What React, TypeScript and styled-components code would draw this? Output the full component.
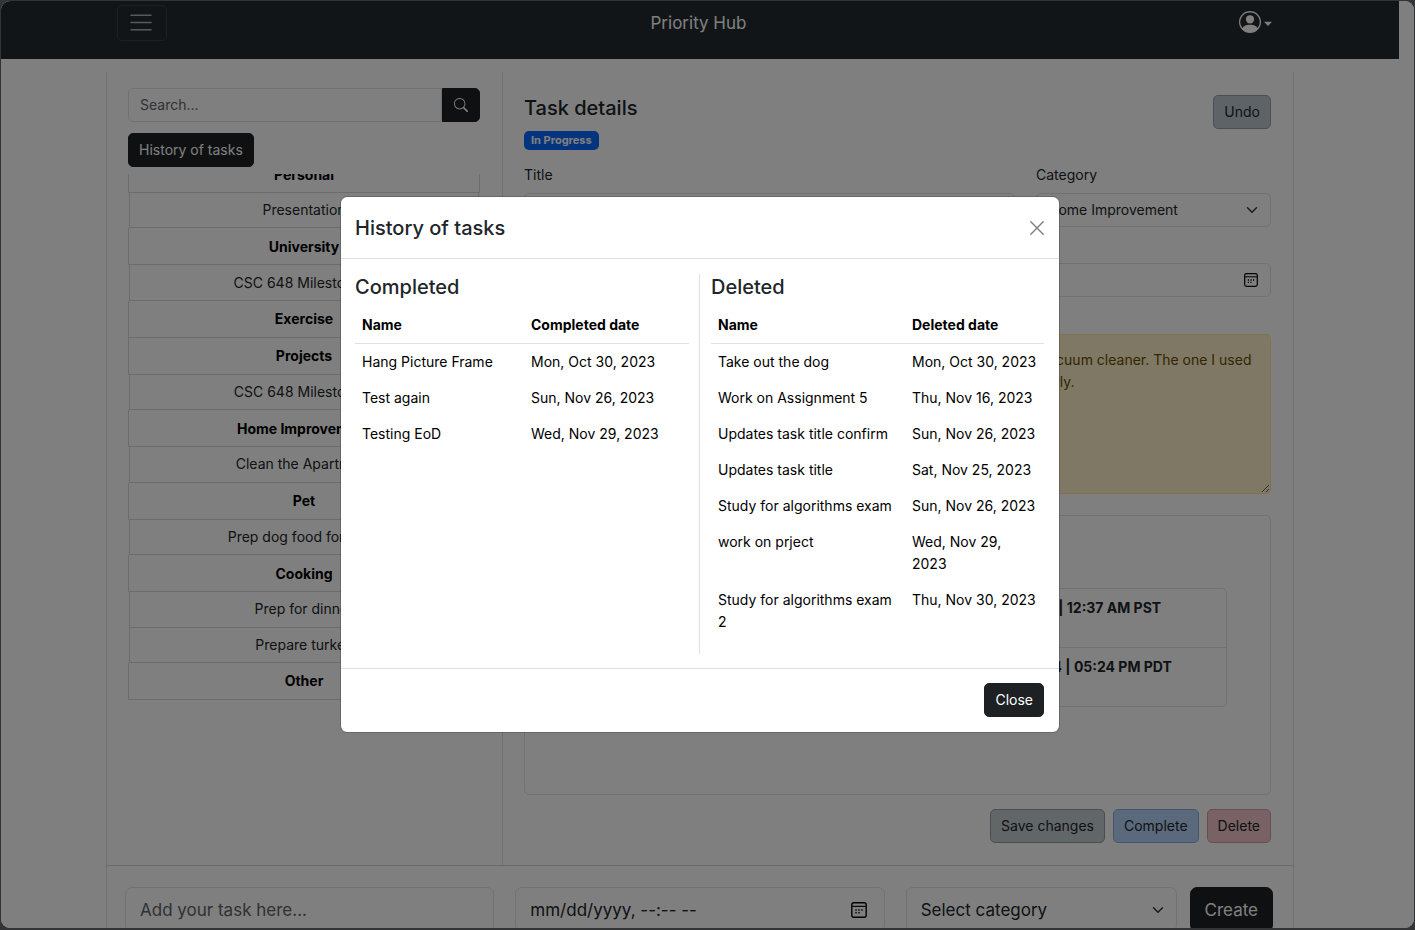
import React, { useLayoutEffect, useRef } from "react";
import styled, { createGlobalStyle, css } from "styled-components";
import { BsPersonCircle, BsSearch } from "react-icons/bs";

const GlobalStyle = createGlobalStyle`
  *, *::before, *::after { box-sizing: border-box; }
  body { margin: 0; background: #323436; }
  body, button, input, select, textarea {
    font-family: Inter, "Liberation Sans", sans-serif;
    font-size: 14px;
    line-height: 22px;
    color: #212529;
  }
  h1, h2, h3, p, ul { margin: 0; padding: 0; }
`;

const Frame = styled.div`
  height: 100vh;
  padding: 1px 1px 2px;
  background: #323436;
`;

const Window = styled.div`
  position: relative;
  height: 100%;
  overflow: hidden;
  border-radius: 9px;
  background: #fff;
`;

const Page = styled.div`
  margin-right: 15px;
`;

const Navbar = styled.header`
  height: 58px;
  padding: 4px 0;
  background: #222a2e;
`;

const NavInner = styled.div`
  display: grid;
  grid-template-columns: 1fr auto 1fr;
  align-items: center;
  max-width: 1188px;
  height: 36px;
  margin: 0 auto;
  padding: 0 22px 0 11px;
`;

const MenuButton = styled.button`
  display: flex;
  align-items: center;
  justify-content: center;
  width: 50px;
  height: 36px;
  padding: 0 2px 0 0;
  border: 1px solid #394044;
  border-radius: 5px;
  background: none;
  color: #b0b2b3;
`;

const Brand = styled.h1`
  padding-left: 8px;
  font-size: 17px;
  line-height: 28px;
  font-weight: 400;
  color: #fff;
`;

const UserButton = styled.button`
  display: flex;
  align-items: center;
  gap: 3px;
  justify-self: end;
  padding: 0 0 2px;
  border: 0;
  background: none;
  color: #fff;
`;

const Board = styled.main`
  max-width: 1188px;
  margin: 13px auto 0;
  border: solid #dee2e6;
  border-width: 0 1px;
`;

const Columns = styled.div`
  display: grid;
  grid-template-columns: 396fr 790fr;
  height: 794px;
  border-bottom: 1px solid #d4d7da;
`;

const Sidebar = styled.aside`
  padding: 16px 22px 0 21px;
  border-right: 1px solid #dee2e6;
`;

const fieldStyle = css`
  width: 100%;
  padding: 0 11px;
  border: 1px solid #dee2e6;
  background: #fff;
  border-radius: 5px;
`;

const SearchForm = styled.form`
  display: flex;
  height: 34px;
  margin-bottom: 11px;
`;

const SearchInput = styled.input`
  ${fieldStyle}
  flex: 1;
  min-width: 0;
  border-radius: 5px 0 0 5px;
  &::placeholder { color: #5f6367; opacity: 1; }
`;

const tones = {
  dark: { bg: "#1d2124", border: "#1d2124", text: "#fff" },
  slate: { bg: "#bcc7d0", border: "#98a0a8", text: "#212529" },
  grey: { bg: "#c3ccd3", border: "#979da3", text: "#212529" },
  blue: { bg: "#b5d2f6", border: "#83aee0", text: "#212529" },
  red: { bg: "#f2c4c8", border: "#d999a0", text: "#212529" },
};

const Button = styled.button<{ $tone: keyof typeof tones }>`
  height: 34px;
  padding: 0 10px;
  border: 1px solid ${(p) => tones[p.$tone].border};
  border-radius: 5px;
  background: ${(p) => tones[p.$tone].bg};
  color: ${(p) => tones[p.$tone].text};
  white-space: nowrap;
`;

const SearchButton = styled(Button)`
  display: flex;
  align-items: center;
  justify-content: center;
  width: 38px;
  border-radius: 0 5px 5px 0;
`;

const TaskScroller = styled.div`
  height: 526px;
  margin-top: 7px;
  overflow-y: auto;
  scrollbar-width: none;
`;

const TaskList = styled.ul`
  display: flex;
  flex-direction: column;
  height: 544px;
  list-style: none;
  text-align: center;
`;

const Category = styled.li`
  display: flex;
  align-items: center;
  justify-content: center;
  flex: 0 0 37px;
  padding-top: 1px;
  border: solid #d5d8db;
  border-width: 0 1px 1px;
  font-weight: 700;
  color: #000;
`;

const TaskItem = styled.li`
  display: flex;
  flex: 1;
  margin: 0 1px;
  border: solid #d5d8db;
  border-width: 0 1px 1px;
`;

const TaskButton = styled.button`
  flex: 1;
  padding: 0;
  border: 0;
  background: none;
`;

const Details = styled.section`
  padding: 23px 22px 0 21px;
`;

const DetailsHead = styled.div`
  display: flex;
  justify-content: space-between;
  align-items: flex-start;
  height: 56px;
  margin-bottom: 13px;
`;

const HeadText = styled.div`
  display: flex;
  flex-direction: column;
  align-items: flex-start;
  gap: 10px;
`;

const Heading = styled.h2`
  font-size: 20px;
  line-height: 26px;
  font-weight: 500;
  color: #212529;
`;

const Badge = styled.span`
  padding: 0 7px;
  border-radius: 5px;
  background: #0768fa;
  font-size: 11px;
  line-height: 19px;
  font-weight: 700;
  color: #fff;
`;

const FieldRow = styled.div`
  display: grid;
  grid-template-columns: 491fr 235fr;
  column-gap: 21px;
  margin-bottom: 7px;
`;

const Field = styled.div`
  margin-bottom: 8px;
`;

const Label = styled.label`
  display: block;
  margin-bottom: 7px;
`;

const Control = styled.div<{ $size?: "lg" }>`
  position: relative;
  flex: 1;
  > svg {
    position: absolute;
    top: 0;
    bottom: 0;
    right: 13px;
    margin: auto 0;
    pointer-events: none;
  }
`;

const DateControl = styled(Control)`
  > svg { right: ${(p) => (p.$size === "lg" ? 18 : 13)}px; }
`;

const largeStyle = css`
  height: 45px;
  padding: 0 14px;
  border-radius: 7px;
  font-size: 17px;
`;

const TextInput = styled.input<{ $size?: "lg" }>`
  ${fieldStyle}
  display: block;
  height: 34px;
  ${(p) => p.$size === "lg" && largeStyle}
  &::placeholder { color: #5f6367; opacity: 1; }
`;

const Select = styled.select<{ $size?: "lg" }>`
  ${fieldStyle}
  display: block;
  height: 34px;
  appearance: none;
  ${(p) => p.$size === "lg" && largeStyle}
`;

const Notes = styled.textarea`
  display: block;
  width: 100%;
  height: 160px;
  padding: 14px;
  border: 1px solid #ffe69c;
  border-radius: 5px;
  background: #fff1ca;
  color: #664d03;
  white-space: pre;
  overflow: hidden;
`;

const Card = styled.div`
  height: 280px;
  margin-top: 21px;
  padding: 22px 43px;
  border: 1px solid #dee2e6;
  border-radius: 5px;
`;

const CardTitle = styled.h3`
  font-size: 17px;
  line-height: 50px;
  font-weight: 500;
  text-align: center;
`;

const DateList = styled.ul`
  list-style: none;
  border: 1px solid #dee2e6;
  border-radius: 5px;
`;

const DateItem = styled.li`
  display: grid;
  grid-template-columns: 1fr 337px;
  height: 58px;
  padding: 8px 14px;
  font-weight: 700;
  white-space: nowrap;
  & + & { border-top: 1px solid #dee2e6; height: 59px; }
`;

const Actions = styled.div`
  display: flex;
  justify-content: flex-end;
  gap: 8px;
  margin-top: 14px;
`;

const CreateBar = styled.form`
  display: grid;
  grid-template-columns: 369fr 369fr 367fr;
  gap: 21px;
  padding: 21px 20px 40px 18px;
`;

const CreateGroup = styled.div`
  display: flex;
  gap: 13px;
`;

const CreateButton = styled(Button)`
  height: 45px;
  padding: 0 14px;
  border-radius: 7px;
  font-size: 17px;
`;

const DockShade = styled.div`
  position: absolute;
  left: 26%;
  right: 30%;
  bottom: 0;
  height: 22px;
  background: radial-gradient(closest-side at 50% 100%, rgba(0, 0, 0, 0.12), rgba(0, 0, 0, 0));
`;

const Backdrop = styled.div`
  position: absolute;
  inset: 0;
  display: flex;
  justify-content: center;
  align-items: center;
  padding-right: 15px;
  background: rgba(0, 0, 0, 0.5);
`;

const Modal = styled.section`
  width: 720px;
  border: 1px solid rgba(0, 0, 0, 0.175);
  border-radius: 7px;
  background: #fff;
  background-clip: padding-box;
`;

const ModalHeader = styled.header`
  display: flex;
  align-items: center;
  justify-content: space-between;
  height: 62px;
  padding: 0 15px 0 14px;
  border-bottom: 1px solid #dee2e6;
`;

const CloseIconButton = styled.button`
  display: flex;
  padding: 0;
  border: 0;
  background: none;
  color: #808080;
`;

const ModalBody = styled.div`
  display: grid;
  grid-template-columns: 344fr 345fr;
  padding: 15px 15px 14px 14px;
`;

const HistoryColumn = styled.div`
  padding-right: 10px;
  & + & {
    padding: 0 0 0 11px;
    border-left: 1px solid #dee2e6;
  }
`;

const HistoryTable = styled.table<{ $nameWidth: number }>`
  width: 100%;
  margin: 7px 0 14px;
  border-collapse: collapse;
  table-layout: fixed;
  color: #000;
  th, td {
    padding: 7px;
    text-align: left;
    vertical-align: top;
  }
  th { border-bottom: 1px solid #dee2e6; font-weight: 700; }
  th:first-child { width: ${(p) => p.$nameWidth}px; }
`;

const ModalFooter = styled.footer`
  display: flex;
  justify-content: flex-end;
  padding: 14px 15px 15px;
  border-top: 1px solid #dee2e6;
`;

const MenuIcon = () => (
  <svg width="22" height="22" viewBox="0 0 22 22" fill="none" stroke="currentColor" strokeWidth="1.5" strokeLinecap="round">
    <path d="M1 3.2h20M1 10.5h20M1 17.7h20" />
  </svg>
);

const Caret = () => (
  <svg width="8" height="7" viewBox="0 0 8 7" fill="currentColor">
    <path d="M0 2.8h8L4 7z" />
  </svg>
);

const Chevron = () => (
  <svg width="12" height="12" viewBox="0 0 16 16" fill="none" stroke="#343a40" strokeWidth="2" strokeLinecap="round" strokeLinejoin="round">
    <path d="m2 5 6 6 6-6" />
  </svg>
);

const CalendarIcon = ({ size }: { size: number }) => (
  <svg width={size} height={size} viewBox="0 0 14 14" fill="none" stroke="#000">
    <rect x=".7" y=".7" width="12.6" height="12.6" rx="1.8" strokeWidth="1.2" />
    <path d="M1 3.8h12" strokeWidth="1" />
    <path d="M3.8 7H5M6.4 7h1.2M9 7h1.2M3.8 9.4H5M6.4 9.4h1.2" strokeWidth="1.3" />
  </svg>
);

const CloseIcon = () => (
  <svg width="14" height="14" viewBox="0 0 14 14" fill="none" stroke="currentColor" strokeWidth="1.4" strokeLinecap="round">
    <path d="M.8.8l12.4 12.4M13.2.8.8 13.2" />
  </svg>
);

const categories = [
  { name: "Personal", tasks: ["Presentation"] },
  { name: "University", tasks: ["CSC 648 Milestone 4"] },
  { name: "Exercise", tasks: [] },
  { name: "Projects", tasks: ["CSC 648 Milestone 5"] },
  { name: "Home Improvement", tasks: ["Clean the Apartment"] },
  { name: "Pet", tasks: ["Prep dog food for Bella"] },
  { name: "Cooking", tasks: ["Prep for dinner", "Prepare turkey"] },
  { name: "Other", tasks: [] },
];

const completed = [
  ["Hang Picture Frame", "Mon, Oct 30, 2023"],
  ["Test again", "Sun, Nov 26, 2023"],
  ["Testing EoD", "Wed, Nov 29, 2023"],
];

const deleted = [
  ["Take out the dog", "Mon, Oct 30, 2023"],
  ["Work on Assignment 5", "Thu, Nov 16, 2023"],
  ["Updates task title confirm", "Sun, Nov 26, 2023"],
  ["Updates task title", "Sat, Nov 25, 2023"],
  ["Study for algorithms exam", "Sun, Nov 26, 2023"],
  ["work on prject", "Wed, Nov 29, 2023"],
  ["Study for algorithms exam 2", "Thu, Nov 30, 2023"],
];

const notes =
  "Clean the living room, the bathroom plus the kitchen before buying the new vacuum cleaner. The one I used\nlast time when I cleaned the apartment was not able to clean the carpet properly.";

function History({ title, rows, nameWidth }: { title: string; rows: string[][]; nameWidth: number }) {
  return (
    <HistoryColumn>
      <Heading>{title}</Heading>
      <HistoryTable $nameWidth={nameWidth}>
        <thead>
          <tr>
            <th scope="col">Name</th>
            <th scope="col">{title} date</th>
          </tr>
        </thead>
        <tbody>
          {rows.map(([name, date]) => (
            <tr key={name}>
              <td>{name}</td>
              <td>{date}</td>
            </tr>
          ))}
        </tbody>
      </HistoryTable>
    </HistoryColumn>
  );
}

export default function App() {
  const scroller = useRef<HTMLDivElement>(null);
  useLayoutEffect(() => {
    if (scroller.current) scroller.current.scrollTop = 18;
  }, []);

  return (
    <Frame>
      <GlobalStyle />
      <Window>
        <Page>
          <Navbar>
            <NavInner>
              <MenuButton type="button" aria-label="Menu"><MenuIcon /></MenuButton>
              <Brand>Priority Hub</Brand>
              <UserButton type="button" aria-label="Account">
                <BsPersonCircle size={22} />
                <Caret />
              </UserButton>
            </NavInner>
          </Navbar>
          <Board>
            <Columns>
              <Sidebar>
                <SearchForm>
                  <SearchInput type="text" placeholder="Search..." aria-label="Search" />
                  <SearchButton $tone="dark" type="button" aria-label="Search"><BsSearch size={14} /></SearchButton>
                </SearchForm>
                <Button $tone="dark" type="button">History of tasks</Button>
                <TaskScroller ref={scroller}>
                  <TaskList>
                    {categories.map((c) => (
                      <React.Fragment key={c.name}>
                        <Category>{c.name}</Category>
                        {c.tasks.map((t) => (
                          <TaskItem key={t}><TaskButton type="button">{t}</TaskButton></TaskItem>
                        ))}
                      </React.Fragment>
                    ))}
                  </TaskList>
                </TaskScroller>
              </Sidebar>
              <Details>
                <DetailsHead>
                  <HeadText>
                    <Heading>Task details</Heading>
                    <Badge>In Progress</Badge>
                  </HeadText>
                  <Button $tone="slate" type="button">Undo</Button>
                </DetailsHead>
                <FieldRow>
                  <div>
                    <Label htmlFor="title">Title</Label>
                    <TextInput id="title" defaultValue="Clean the Apartment" />
                  </div>
                  <div>
                    <Label htmlFor="category">Category</Label>
                    <Control>
                      <Select id="category"><option>Home Improvement</option></Select>
                      <Chevron />
                    </Control>
                  </div>
                </FieldRow>
                <Field>
                  <Label htmlFor="due">Due date</Label>
                  <DateControl>
                    <TextInput id="due" defaultValue="11/29/2023, 05:24 PM" />
                    <CalendarIcon size={14} />
                  </DateControl>
                </Field>
                <Label htmlFor="notes">Description</Label>
                <Notes id="notes" defaultValue={notes} />
                <Card>
                  <CardTitle>Reminders</CardTitle>
                  <DateList>
                    <DateItem><span>Created</span><span>Wednesday, Nov 29, 2023 | 12:37 AM PST</span></DateItem>
                    <DateItem><span>Updated</span><span>Wednesday, June 20, 2024 | 05:24 PM PDT</span></DateItem>
                  </DateList>
                </Card>
                <Actions>
                  <Button $tone="grey" type="button">Save changes</Button>
                  <Button $tone="blue" type="button">Complete</Button>
                  <Button $tone="red" type="button">Delete</Button>
                </Actions>
              </Details>
            </Columns>
            <CreateBar>
              <TextInput $size="lg" placeholder="Add your task here..." aria-label="New task" />
              <DateControl $size="lg">
                <TextInput $size="lg" defaultValue="mm/dd/yyyy, --:-- --" aria-label="Due date" />
                <CalendarIcon size={16} />
              </DateControl>
              <CreateGroup>
                <Control $size="lg">
                  <Select $size="lg" aria-label="Category"><option>Select category</option></Select>
                  <Chevron />
                </Control>
                <CreateButton $tone="dark" type="button">Create</CreateButton>
              </CreateGroup>
            </CreateBar>
          </Board>
        </Page>
        <DockShade />
        <Backdrop>
          <Modal role="dialog" aria-modal="true" aria-labelledby="history-title">
            <ModalHeader>
              <Heading id="history-title">History of tasks</Heading>
              <CloseIconButton type="button" aria-label="Close dialog"><CloseIcon /></CloseIconButton>
            </ModalHeader>
            <ModalBody>
              <History title="Completed" rows={completed} nameWidth={169} />
              <History title="Deleted" rows={deleted} nameWidth={194} />
            </ModalBody>
            <ModalFooter>
              <Button $tone="dark" type="button">Close</Button>
            </ModalFooter>
          </Modal>
        </Backdrop>
      </Window>
    </Frame>
  );
}
